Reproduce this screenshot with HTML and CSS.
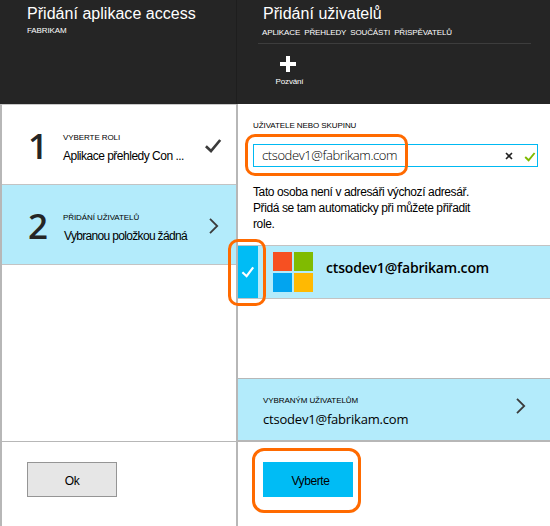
FILE: index.html
```html
<!DOCTYPE html>
<html lang="cs">
<head>
<meta charset="utf-8">
<title>Přidání uživatelů</title>
<link rel="stylesheet" href="styles.css">
</head>
<body>
<div class="blades">
  <section class="blade blade-access">
    <header class="head">
      <h1 class="title">Přidání aplikace access</h1>
      <div class="sub sub-fabrikam">FABRIKAM</div>
    </header>
    <div class="body">
      <div class="step">
        <span class="num">1</span>
        <div class="step-text">
          <div class="caps caps-role">VYBERTE ROLI</div>
          <div class="value value-role">Aplikace přehledy Con ...</div>
        </div>
        <svg class="step-icon" viewBox="0 0 18 16"><path d="M.9 8.2 6 13 15.2 2" fill="none" stroke="#3b3b3b" stroke-width="2.7"/></svg>
      </div>
      <div class="step active">
        <span class="num">2</span>
        <div class="step-text">
          <div class="caps caps-add">PŘIDÁNÍ UŽIVATELŮ</div>
          <div class="value value-add">Vybranou položkou žádná</div>
        </div>
        <svg class="step-icon" viewBox="0 0 18 16"><path d="M5 .8 12.2 8 5 15.2" fill="none" stroke="#3b3b3b" stroke-width="1.8"/></svg>
      </div>
      <footer class="foot"><button class="btn btn-ok">Ok</button></footer>
    </div>
  </section>
  <section class="blade blade-users">
    <header class="head">
      <h1 class="title">Přidání uživatelů</h1>
      <div class="sub sub-parts">APLIKACE PŘEHLEDY SOUČÁSTI PŘISPĚVATELŮ</div>
      <div class="command">
        <svg class="plus" viewBox="0 0 16 16"><path d="M6 0h4v6h6v4h-6v6H6v-6H0V6h6z" fill="#fff"/></svg>
        <span class="command-label">Pozvání</span>
      </div>
    </header>
    <div class="body">
      <div class="caps caps-field">UŽIVATELE NEBO SKUPINU</div>
      <div class="field">
        <span class="field-text">ctsodev1@fabrikam.com</span>
        <svg class="clear" viewBox="0 0 8 8"><path d="M1 1 7 7M7 1 1 7" stroke="#222" stroke-width="1.6"/></svg>
        <svg class="valid" viewBox="0 0 12 10"><path d="M1.2 5 4.6 8.3 10.6 1" fill="none" stroke="#7fba00" stroke-width="1.9"/></svg>
        <i class="mark mark-field"></i>
      </div>
      <p class="note">Tato osoba není v adresáři výchozí adresář.<br>Přidá se tam automaticky při můžete přiřadit<br>role.</p>
      <div class="user">
        <div class="tick"><svg class="tick-icon" viewBox="0 0 14 12"><path d="M1.4 6.2 5.6 10.2 12.2 1.4" fill="none" stroke="#fff" stroke-width="2.2"/></svg></div>
        <svg class="logo" viewBox="0 0 40 40"><path d="M0 0h19v19H0z" fill="#f65022"/><path d="M21 0h19v19H21z" fill="#80bb01"/><path d="M0 21h19v19H0z" fill="#02a4ef"/><path d="M21 21h19v19H21z" fill="#ffb902"/></svg>
        <span class="user-name">ctsodev1@fabrikam.com</span>
        <i class="mark mark-tick"></i>
      </div>
      <div class="selected">
        <div class="selected-text">
          <div class="caps caps-selected">VYBRANÝM UŽIVATELŮM</div>
          <div class="selected-name">ctsodev1@fabrikam.com</div>
        </div>
        <svg class="step-icon" viewBox="0 0 18 16"><path d="M5 .8 12.2 8 5 15.2" fill="none" stroke="#3b3b3b" stroke-width="1.8"/></svg>
      </div>
      <footer class="foot"><button class="btn btn-select">Vyberte<i class="mark mark-button"></i></button></footer>
    </div>
  </section>
</div>
</body>
</html>
```
FILE: styles.css
```css
* { box-sizing: border-box; }
body {
  margin: 0;
  background: #fff;
  color: #000;
  font-family: "Liberation Sans", sans-serif;
}
svg { display: block; flex: none; }
.blades {
  display: grid;
  grid-template-columns: 236px 314px;
  width: 550px;
  height: 526px;
  overflow: hidden;
}
.blade { display: flex; flex-direction: column; }
.head {
  height: 104px;
  padding: 4px 0 0 27px;
  background: #252525;
  color: #fff;
}
.blade-users .head { border-left: 1px solid #1e1e1e; padding-left: 26px; }
.title {
  margin: 0;
  font-size: 16px;
  font-weight: 400;
  line-height: 20px;
  letter-spacing: .03px;
  white-space: nowrap;
}
.sub {
  font-size: 8px;
  line-height: 14px;
  white-space: nowrap;
}
.sub-fabrikam { letter-spacing: -.1px; }
.sub-parts {
  width: 273px;
  height: 20px;
  margin-left: -5px;
  padding: 2px 0 0 4px;
  border-bottom: 1px solid #3d3d3d;
  word-spacing: 2px;
  letter-spacing: -.13px;
}
.command {
  display: flex;
  flex-direction: column;
  align-items: center;
  width: 50px;
  padding-top: 12px;
}
.plus { width: 16px; height: 16px; }
.command-label {
  margin: 5px 0 0 3px;
  font-size: 8px;
  line-height: 10px;
  letter-spacing: -.15px;
}
.body {
  display: flex;
  flex: 1;
  flex-direction: column;
  border-left: 2px solid #b7b7b7;
}
.blade-access .body { border-top: 1px solid #c8c8c8; }
.step {
  display: flex;
  height: 80px;
  padding-left: 25px;
  border-bottom: 1px solid #c3c3c3;
}
.active, .user, .selected { background: #b3ebfb; }
.num {
  width: 36px;
  padding: 17px 0 0 1px;
  font: 600 35px/48px "Open Sans", sans-serif;
  color: #252525;
}
.step-text { width: 142px; padding-top: 27px; white-space: nowrap; }
.caps {
  font-size: 8px;
  line-height: 12px;
  letter-spacing: -.08px;
  white-space: nowrap;
}
.value { margin-top: 4px; font: 12px/16px "Liberation Sans", sans-serif; }
.value-role { letter-spacing: -.5px; }
.value-add { padding-left: 1px; letter-spacing: -.67px; }
.step-icon { width: 18px; height: 16px; margin-top: 33px; }
.foot {
  height: 85px;
  margin-top: auto;
  padding: 20px 25px;
  border-top: 1px solid #b7b7b7;
}
.btn {
  display: block;
  position: relative;
  width: 90px;
  height: 35px;
  padding: 2px 0 0;
  border: 0;
  font: 12px/16px "Liberation Sans", sans-serif;
  color: #000;
}
.btn-ok { border: 1px solid #959595; background: #e6e6e6; letter-spacing: -.5px; }
.btn-select { padding-left: 5px; background: #00bcf5; letter-spacing: -.4px; }
.caps-field { height: 24px; margin: 16px 0 0 15px; }
.field {
  position: relative;
  display: flex;
  align-items: center;
  width: 285px;
  height: 23px;
  margin-left: 15px;
  border: 1px solid #00b9f2;
}
.field-text {
  width: 243px;
  padding: 0 0 1px 8px;
  font: 300 13px/20px "Open Sans", sans-serif;
  letter-spacing: -.4px;
  color: #000;
}
.clear { width: 8px; height: 8px; margin: 0 0 0 8px; }
.valid { width: 12px; height: 10px; margin: 2px 0 0 11px; }
.note {
  height: 48px;
  margin: 17px 0 0 15px;
  font-size: 12px;
  line-height: 16px;
  letter-spacing: -.39px;
  white-space: nowrap;
}
.user {
  position: relative;
  display: flex;
  height: 54px;
  margin-top: 13px;
  border: solid #c3c3c3;
  border-width: 1px 0;
}
.tick {
  display: flex;
  align-items: center;
  justify-content: center;
  width: 20px;
  background: #00bcf5;
}
.tick-icon { width: 14px; height: 12px; }
.logo { width: 40px; height: 40px; margin: 6px 0 0 15px; }
.user-name {
  margin: 12px 0 0 13px;
  font: 600 14px/20px "Open Sans", sans-serif;
  letter-spacing: -.18px;
}
.selected {
  display: flex;
  height: 62px;
  margin-top: auto;
  padding-left: 25px;
  border-top: 1px solid #b7b7b7;
}
.selected-text { width: 249px; padding-top: 16px; }
.selected-name {
  margin-top: 2px;
  font: 13px/20px "Open Sans", sans-serif;
  letter-spacing: -.2px;
}
.selected .step-icon { margin-top: 19px; }
.blade-users .foot { height: 86px; margin-top: 0; border-top-width: 2px; }
.mark {
  position: absolute;
  border: 3px solid #ff6a00;
  border-radius: 10px;
  pointer-events: none;
}
.mark-field { left: -9px; top: -11px; width: 163px; height: 42px; }
.mark-tick { left: -10px; top: -7px; width: 38px; height: 67px; }
.mark-button { left: -11px; top: -14px; width: 109px; height: 65px; border-radius: 12px; }
```
